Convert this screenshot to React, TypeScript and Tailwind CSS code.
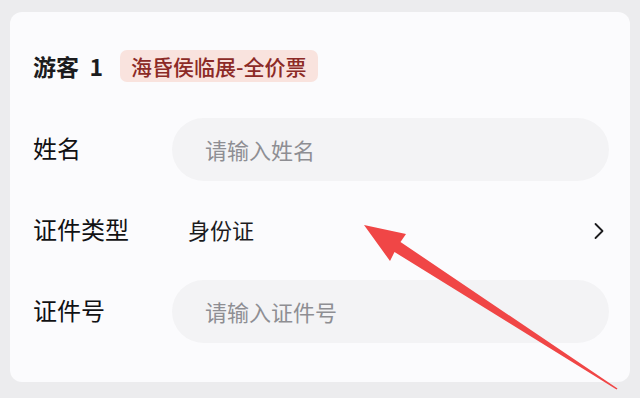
import React from 'react';

const font = { fontFamily: '"Noto Sans CJK SC", "Noto Sans", sans-serif' };

function Arrow() {
  return (
    <svg className="pointer-events-none absolute inset-0" width="640" height="398" viewBox="0 0 640 398">
      <polygon
        points="364,225 406,234 400.5,242 617.5,388.5 616.5,389.5 394.5,252 390,261"
        fill="#f04646"
      />
    </svg>
  );
}

export default function App() {
  return (
    <div className="relative h-[398px] w-[640px] overflow-hidden bg-[#ececee] px-[10px] pt-[12px]" style={font}>
      <div className="h-[370px] rounded-[12px] bg-[#fbfbfd] pl-[23px] pr-[21px] pt-[38px]">
        <div className="flex h-[32px] items-center leading-none">
          <span className="text-[23px] font-bold text-[#1c1c1e]">游客&nbsp;&nbsp;1</span>
          <span className="ml-[17px] flex h-[32px] items-center rounded-[7px] bg-[#f9e3de] px-[11px] text-[21px] font-medium text-[#8c2a26]">
            海昏侯临展-全价票
          </span>
        </div>

        <div className="mt-[36px] flex flex-col gap-[18px]">
          <div className="flex h-[63px] items-center">
            <span className="w-[139px] pb-[3px] text-[24px] text-[#111113]">姓名</span>
            <div className="flex h-full flex-1 items-center rounded-full bg-[#f3f3f5] pl-[33px] text-[22px] text-[#8e8e93]">
              请输入姓名
            </div>
          </div>

          <div className="flex h-[63px] items-center">
            <span className="w-[139px] pb-[3px] text-[24px] text-[#111113]">证件类型</span>
            <div className="flex h-full flex-1 items-center justify-between pl-[16px] pr-[4px]">
              <span className="pb-[2px] text-[22px] text-[#1c1c1e]">身份证</span>
              <svg width="12" height="18" viewBox="0 0 12 18" fill="none">
                <path d="M2.5 2 L9.5 9 L2.5 16" stroke="#1c1c1e" strokeWidth="1.8" strokeLinecap="round" strokeLinejoin="round" />
              </svg>
            </div>
          </div>

          <div className="flex h-[63px] items-center">
            <span className="w-[139px] pb-[3px] text-[24px] text-[#111113]">证件号</span>
            <div className="flex h-full flex-1 items-center rounded-full bg-[#f3f3f5] pl-[33px] text-[22px] text-[#8e8e93]">
              请输入证件号
            </div>
          </div>
        </div>
      </div>
      <Arrow />
    </div>
  );
}
